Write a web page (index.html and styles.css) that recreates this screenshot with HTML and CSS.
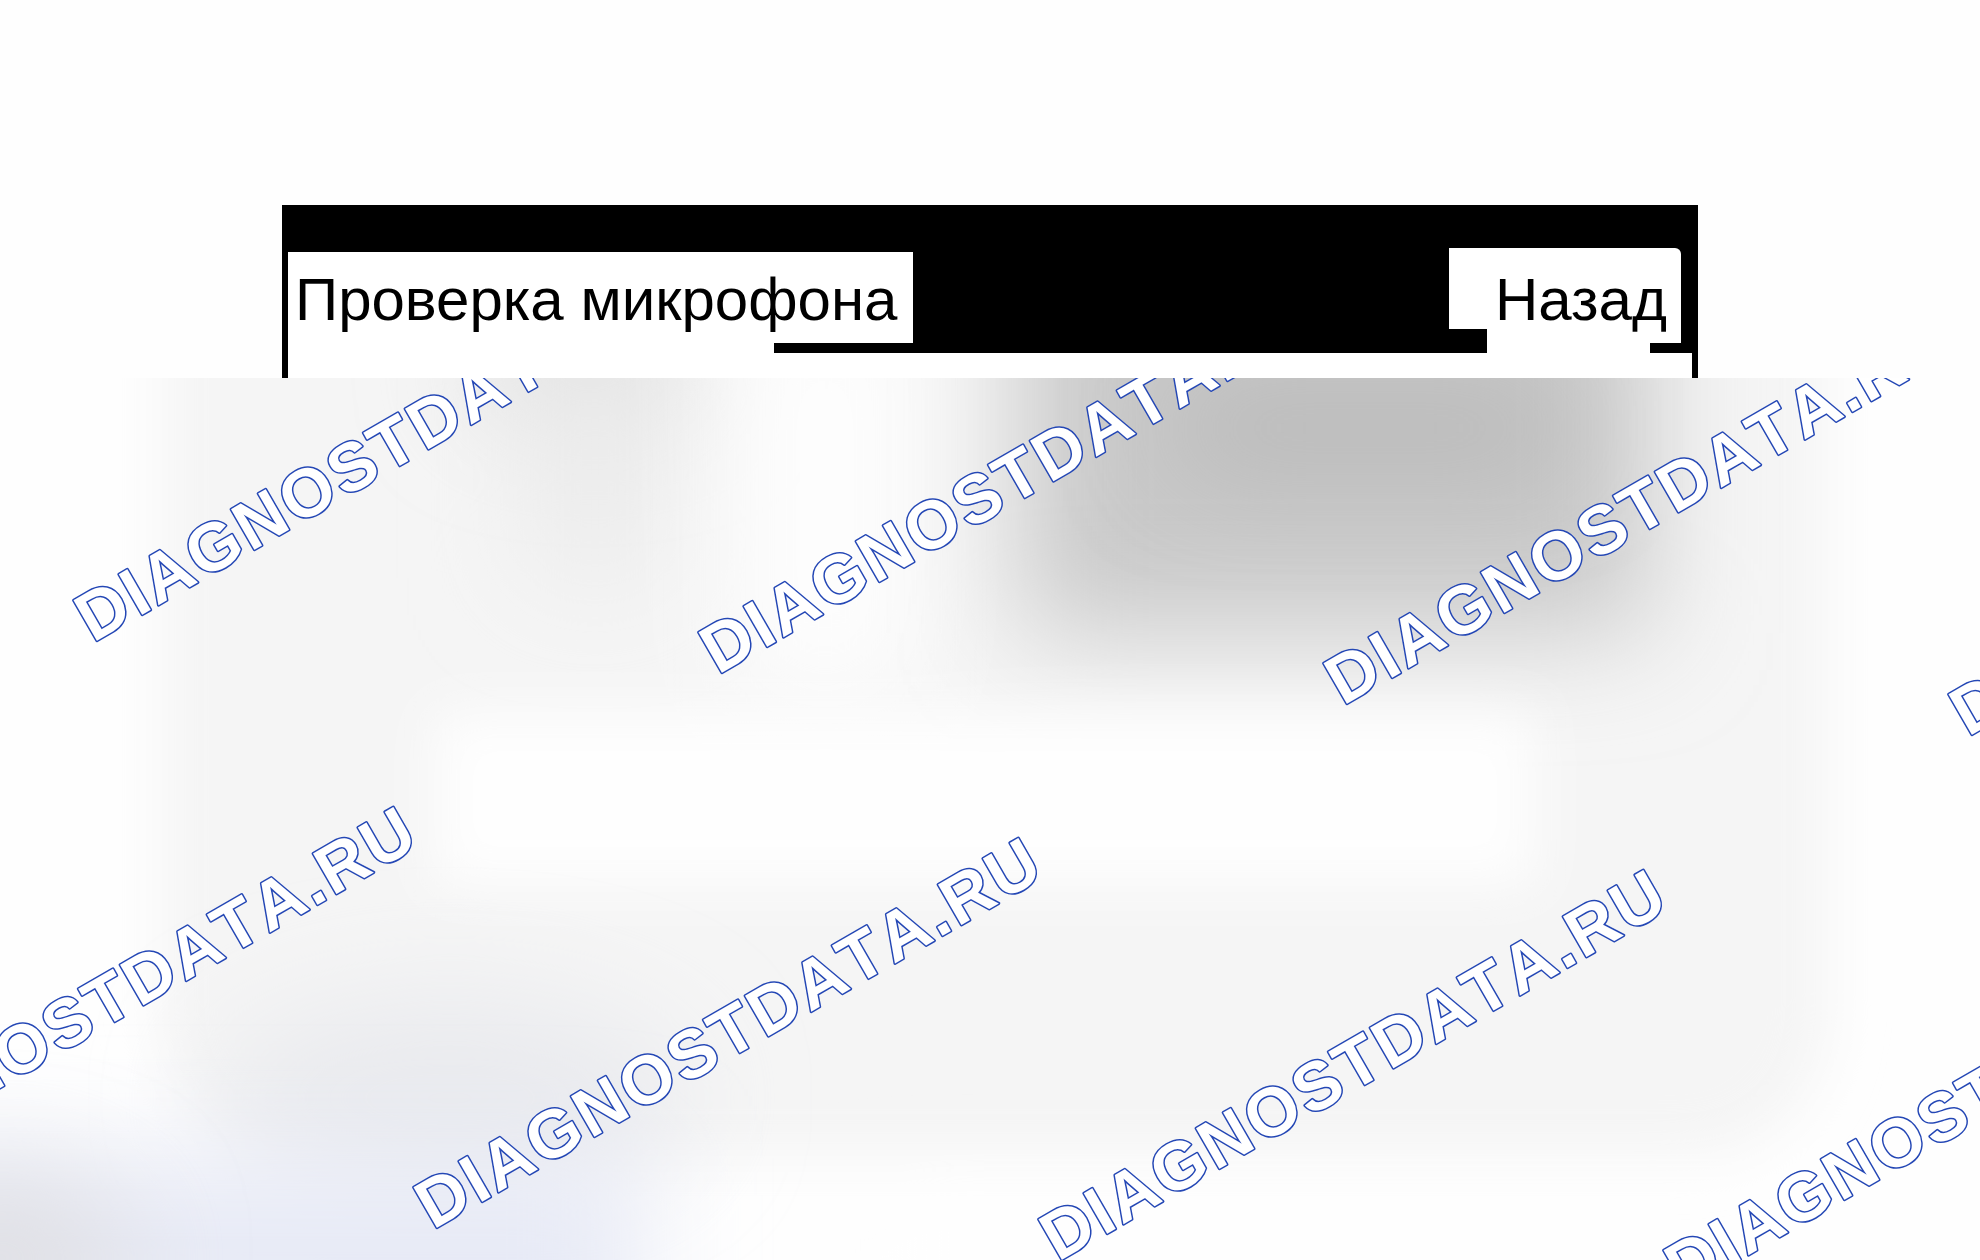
FILE: index.html
```html
<!DOCTYPE html>
<html lang="ru">
<head>
<meta charset="utf-8">
<title>Проверка микрофона</title>
<link rel="stylesheet" href="styles.css">
</head>
<body>
<main class="page">
  <section class="screen">
    <div class="frame">
      <header class="bar">
        <h1 class="title">Проверка микрофона</h1>
        <button class="back" type="button">Назад</button>
      </header>
    </div>
  </section>
  <section class="stage">
    <svg class="art" aria-hidden="true">
      <defs>
        <filter id="soft" filterUnits="userSpaceOnUse" x="-400" y="-400" width="2800" height="1800"><feGaussianBlur stdDeviation="26"/></filter>
        <filter id="wide" filterUnits="userSpaceOnUse" x="-400" y="-400" width="2800" height="1800"><feGaussianBlur stdDeviation="56"/></filter>
      </defs>
      <rect class="rim" x="160" y="-200" width="1670" height="980" rx="140" filter="url(#soft)"/>
      <ellipse class="smudge" cx="590" cy="-10" rx="120" ry="50" filter="url(#wide)"/>
      <rect class="smudge-light" x="530" y="0" width="130" height="200" filter="url(#wide)"/>
      <rect class="glow" x="740" y="-80" width="170" height="400" filter="url(#wide)"/>
      <rect class="shade" x="1020" y="-160" width="630" height="415" filter="url(#wide)"/>
      <rect class="core" x="1180" y="20" width="380" height="60" filter="url(#wide)"/>
      <rect class="glow" x="435" y="335" width="1100" height="172" filter="url(#soft)"/>
      <ellipse class="mist" cx="450" cy="720" rx="240" ry="100" filter="url(#wide)"/>
      <rect class="glow" x="850" y="850" width="1300" height="200" filter="url(#wide)"/>
      <rect class="blue" x="-160" y="780" width="800" height="240" filter="url(#wide)"/>
      <ellipse class="corner" cx="0" cy="880" rx="130" ry="80" filter="url(#wide)"/>
    </svg>
    <svg class="marks">
      <g class="mark">
        <text transform="translate(93 265) rotate(-30)">DIAGNOSTDATA.RU</text>
        <text transform="translate(718 297) rotate(-30)">DIAGNOSTDATA.RU</text>
        <text transform="translate(1343 328) rotate(-30)">DIAGNOSTDATA.RU</text>
        <text transform="translate(1968 359) rotate(-30)">DIAGNOSTDATA.RU</text>
        <text transform="translate(-192 821) rotate(-30)">DIAGNOSTDATA.RU</text>
        <text transform="translate(433 852) rotate(-30)">DIAGNOSTDATA.RU</text>
        <text transform="translate(1058 884) rotate(-30)">DIAGNOSTDATA.RU</text>
        <text transform="translate(1683 915) rotate(-30)">DIAGNOSTDATA.RU</text>
      </g>
    </svg>
  </section>
</main>
</body>
</html>
```

FILE: styles.css
```css
* { box-sizing: border-box; }

body {
  margin: 0;
  background: #fefefe;
  font-family: "Liberation Sans", Arial, sans-serif;
}

.page {
  display: flex;
  flex-direction: column;
  min-height: 100vh;
}

.screen { padding: 205px 282px 0; }

.frame {
  padding-bottom: 25px;
  border: solid #000;
  border-width: 0 6px;
  background: #fff;
}

.bar {
  display: flex;
  justify-content: space-between;
  align-items: flex-end;
  padding: 43px 11px 0 0;
  background: #000;
}

/* Notched white plates: the black strips continue the bar's lower edge. */
.title,
.back {
  margin: 0;
  border: 0;
  color: #000;
  font-family: inherit;
  font-size: 60px;
  font-weight: 400;
  line-height: 68px;
  white-space: nowrap;
}

.title {
  width: 625px;
  padding: 14px 0 19px 7px;
  background: linear-gradient(#000, #000) right bottom / 139px 10px no-repeat #fff;
}

.back {
  width: 232px;
  padding: 18px 0 19px 46px;
  border-top-right-radius: 6px;
  text-align: left;
  background:
    linear-gradient(#000, #000) left bottom / 38px 24px no-repeat,
    linear-gradient(#000, #000) right bottom / 31px 10px no-repeat,
    #fff;
}

.stage {
  position: relative;
  flex: 1;
  min-height: 640px;
  overflow: hidden;
}

.art,
.marks {
  position: absolute;
  inset: 0;
  width: 100%;
  height: 100%;
}

.rim { fill: #f5f5f5; }
.smudge { fill: #dadada; }
.smudge-light { fill: #ebebeb; }
.glow { fill: #fefefe; }
.shade { fill: #c9c9c9; }
.core { fill: #b0b0b0; }
.mist { fill: #e9eaee; }
.blue { fill: #e7eaf6; }
.corner { fill: #e0e0e4; }

.mark {
  fill: #fff;
  stroke: #2447b5;
  stroke-width: 3px;
  stroke-linejoin: round;
  paint-order: stroke;
  font-size: 68px;
  font-weight: 700;
  font-kerning: none;
  letter-spacing: 3px;
}
```
